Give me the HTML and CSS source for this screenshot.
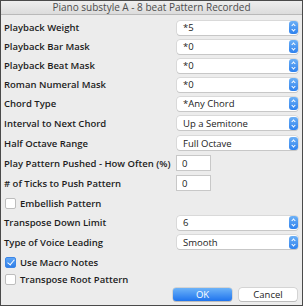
FILE: index.html
```html
<!DOCTYPE html>
<html lang="en">
<head>
  <meta charset="UTF-8">
  <title>Piano substyle A - 8 beat Pattern Recorded</title>
  <link rel="stylesheet" href="styles.css">
</head>
<body>
  <div class="window">
    <div class="titlebar">Piano substyle A - 8 beat Pattern Recorded</div>
    <div class="form">

      <div class="row">
        <span class="label">Playback Weight</span>
        <div class="select"><span>*5</span><span class="stepper"></span></div>
      </div>
      <div class="row">
        <span class="label">Playback Bar Mask</span>
        <div class="select"><span>*0</span><span class="stepper"></span></div>
      </div>
      <div class="row">
        <span class="label">Playback Beat Mask</span>
        <div class="select"><span>*0</span><span class="stepper"></span></div>
      </div>
      <div class="row">
        <span class="label">Roman Numeral Mask</span>
        <div class="select"><span>*0</span><span class="stepper"></span></div>
      </div>
      <div class="row">
        <span class="label">Chord Type</span>
        <div class="select"><span>*Any Chord</span><span class="stepper"></span></div>
      </div>
      <div class="row tall">
        <span class="label">Interval to Next Chord</span>
        <div class="select"><span>Up a Semitone</span><span class="stepper"></span></div>
      </div>
      <div class="row tall">
        <span class="label">Half Octave Range</span>
        <div class="select"><span>Full Octave</span><span class="stepper"></span></div>
      </div>
      <div class="row tall">
        <span class="label">Play Pattern Pushed - How Often (%)</span>
        <div class="field">0</div>
      </div>
      <div class="row tall">
        <span class="label"># of Ticks to Push Pattern</span>
        <div class="field">0</div>
      </div>
      <div class="row tall">
        <span class="check"></span>
        <span class="label">Embellish Pattern</span>
      </div>
      <div class="row">
        <span class="label">Transpose Down Limit</span>
        <div class="select"><span>6</span><span class="stepper"></span></div>
      </div>
      <div class="row tall">
        <span class="label">Type of Voice Leading</span>
        <div class="select"><span>Smooth</span><span class="stepper"></span></div>
      </div>
      <div class="row tall">
        <span class="check checked"></span>
        <span class="label">Use Macro Notes</span>
      </div>
      <div class="row short">
        <span class="check"></span>
        <span class="label">Transpose Root Pattern</span>
      </div>

      <div class="buttons">
        <button class="btn primary">OK</button>
        <button class="btn">Cancel</button>
      </div>
    </div>
  </div>
</body>
</html>
```

FILE: styles.css
```css
body {
  margin: 0;
  background: #fff;
  font-family: 'Open Sans', 'Liberation Sans', Arial, sans-serif;
}

.window {
  width: 301px;
  height: 304px;
  border: 1px solid #4a4a4a;
  background: #ececec;
  overflow: hidden;
}

.titlebar {
  height: 13px;
  line-height: 13px;
  text-align: center;
  font-size: 10px;
  color: #4d4d4d;
  background: linear-gradient(#eeeeee, #dcdcdc);
  border-bottom: 1px solid #b9b9b9;
}

.form {
  padding: 5px 4px 0 3px;
}

.row {
  display: flex;
  align-items: center;
  height: 19px;
}
.row.tall {
  height: 20px;
}
.row.short {
  height: 14px;
}

.label {
  font-size: 9.5px;
  font-weight: 600;
  color: #1d1d1d;
  white-space: nowrap;
  margin-top: -4px;
}

.select,
.field {
  margin-left: auto;
  height: 14px;
  background: #fff;
  border-radius: 3px;
  box-shadow: 0 0 0 0.5px #c6c6c6, 0 1px 0 #c9c9c9;
  font-size: 9.5px;
  color: #222;
  display: flex;
  align-items: center;
  margin-top: -4px;
}

.select {
  width: 121px;
  padding-left: 6px;
  box-sizing: border-box;
  justify-content: space-between;
}

.field {
  width: 28px;
  padding-left: 5px;
  margin-right: 88px;
  border-radius: 0;
  box-shadow: 0 0 0 1px #c8c8c8;
}

.stepper {
  width: 9px;
  height: 13px;
  border-radius: 3px;
  background: linear-gradient(#6cb0f6, #2f82ee);
  position: relative;
}
.stepper::before,
.stepper::after {
  content: "";
  position: absolute;
  left: 3px;
  width: 2px;
  height: 2px;
  border-left: 1px solid #fff;
  border-top: 1px solid #fff;
}
.stepper::before {
  top: 3px;
  transform: rotate(45deg);
}
.stepper::after {
  top: 7px;
  transform: rotate(225deg);
}

.check {
  width: 9px;
  height: 9px;
  margin-left: 1px;
  margin-right: 4px;
  margin-top: -4px;
  background: #fff;
  border: 1px solid #bdbdbd;
  border-radius: 2px;
  position: relative;
}
.check.checked {
  background: linear-gradient(#5ea6f6, #2f7fe9);
  border-color: #3d86e6;
}
.check.checked::after {
  content: "";
  position: absolute;
  left: 3px;
  top: 0;
  width: 3px;
  height: 6px;
  border-right: 1.5px solid #fff;
  border-bottom: 1.5px solid #fff;
  transform: rotate(40deg);
}

.buttons {
  display: flex;
  justify-content: flex-end;
  gap: 7px;
  padding-right: 1px;
}

.btn {
  height: 13px;
  width: 58px;
  padding: 0;
  border: none;
  border-radius: 3px;
  font-family: inherit;
  font-size: 9.5px;
  color: #222;
  background: #fff;
  box-shadow: 0 0 0 0.5px #bcbcbc, 0 1px 0 #bdbdbd;
  line-height: 13px;
}
.btn.primary {
  width: 59px;
  color: #fff;
  background: linear-gradient(#6db3f8, #1f74ee);
}
```
